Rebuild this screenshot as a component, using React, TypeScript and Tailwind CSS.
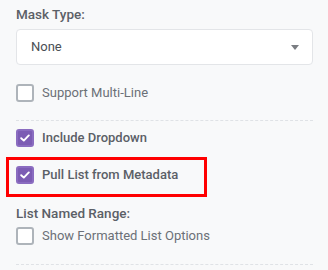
import React from "react";

function Box({ checked }: { checked?: boolean }) {
  if (checked) {
    return (
      <div className="w-[18px] h-[18px] rounded-[3px] bg-[#7c5cb4] border-2 border-[#8a6cc0] flex items-center justify-center shrink-0">
        <svg width="10" height="8" viewBox="0 0 10 8" fill="none">
          <path d="M1.2 4.2 L3.8 6.6 L8.8 1.4" stroke="#ffffff" strokeWidth="1.9" strokeLinecap="round" strokeLinejoin="round" />
        </svg>
      </div>
    );
  }
  return <div className="w-[18px] h-[18px] rounded-[3px] bg-white border-2 border-[#aeb4ba] shrink-0" />;
}

function Row({ checked, label, bold }: { checked?: boolean; label: string; bold?: boolean }) {
  return (
    <div className="flex items-center h-[18px] gap-[8px]">
      <Box checked={checked} />
      <span className={`text-[13px] leading-[18px] ${bold ? "font-medium text-[#5b6067]" : "text-[#6b7077]"}`}>{label}</span>
    </div>
  );
}

export default function App() {
  return (
    <div className="w-[328px] h-[270px] bg-[#f8f9fa] overflow-hidden font-['Roboto',sans-serif]">
      <div className="pl-4 pr-[15px] pt-[5px] flex flex-col">
        <div className="text-[13.5px] leading-[18px] font-medium text-[#5b6067]">Mask Type:</div>
        <div className="mt-[6px] h-[36px] bg-white border border-[#e3e5e8] rounded-[4px] flex items-center justify-between pl-[14px] pr-[13px]">
          <span className="text-[13px] text-[#4a4f55]">None</span>
          <svg width="8" height="5" viewBox="0 0 8 5">
            <path d="M0 0 L8 0 L4 5 Z" fill="#7a7d82" />
          </svg>
        </div>
        <div className="mt-[19px]">
          <Row label="Support Multi-Line" />
        </div>
        <div className="mt-[18px] border-t border-dashed border-[#dfe2e6]" />
        <div className="mt-[8px]">
          <Row checked bold label="Include Dropdown" />
        </div>
        <div className="mt-[10px] -ml-[10px] w-[201px] border-[3px] border-[#ff0000] pl-[7px] pt-[6px] pb-[10px]">
          <Row checked bold label="Pull List from Metadata" />
        </div>
        <div className="mt-[7px] text-[13.5px] leading-[18px] font-medium text-[#5b6067]">List Named Range:</div>
        <div className="mt-[5px]">
          <Row label="Show Formatted List Options" />
        </div>
        <div className="mt-[19px] border-t border-dashed border-[#dfe2e6]" />
      </div>
    </div>
  );
}
